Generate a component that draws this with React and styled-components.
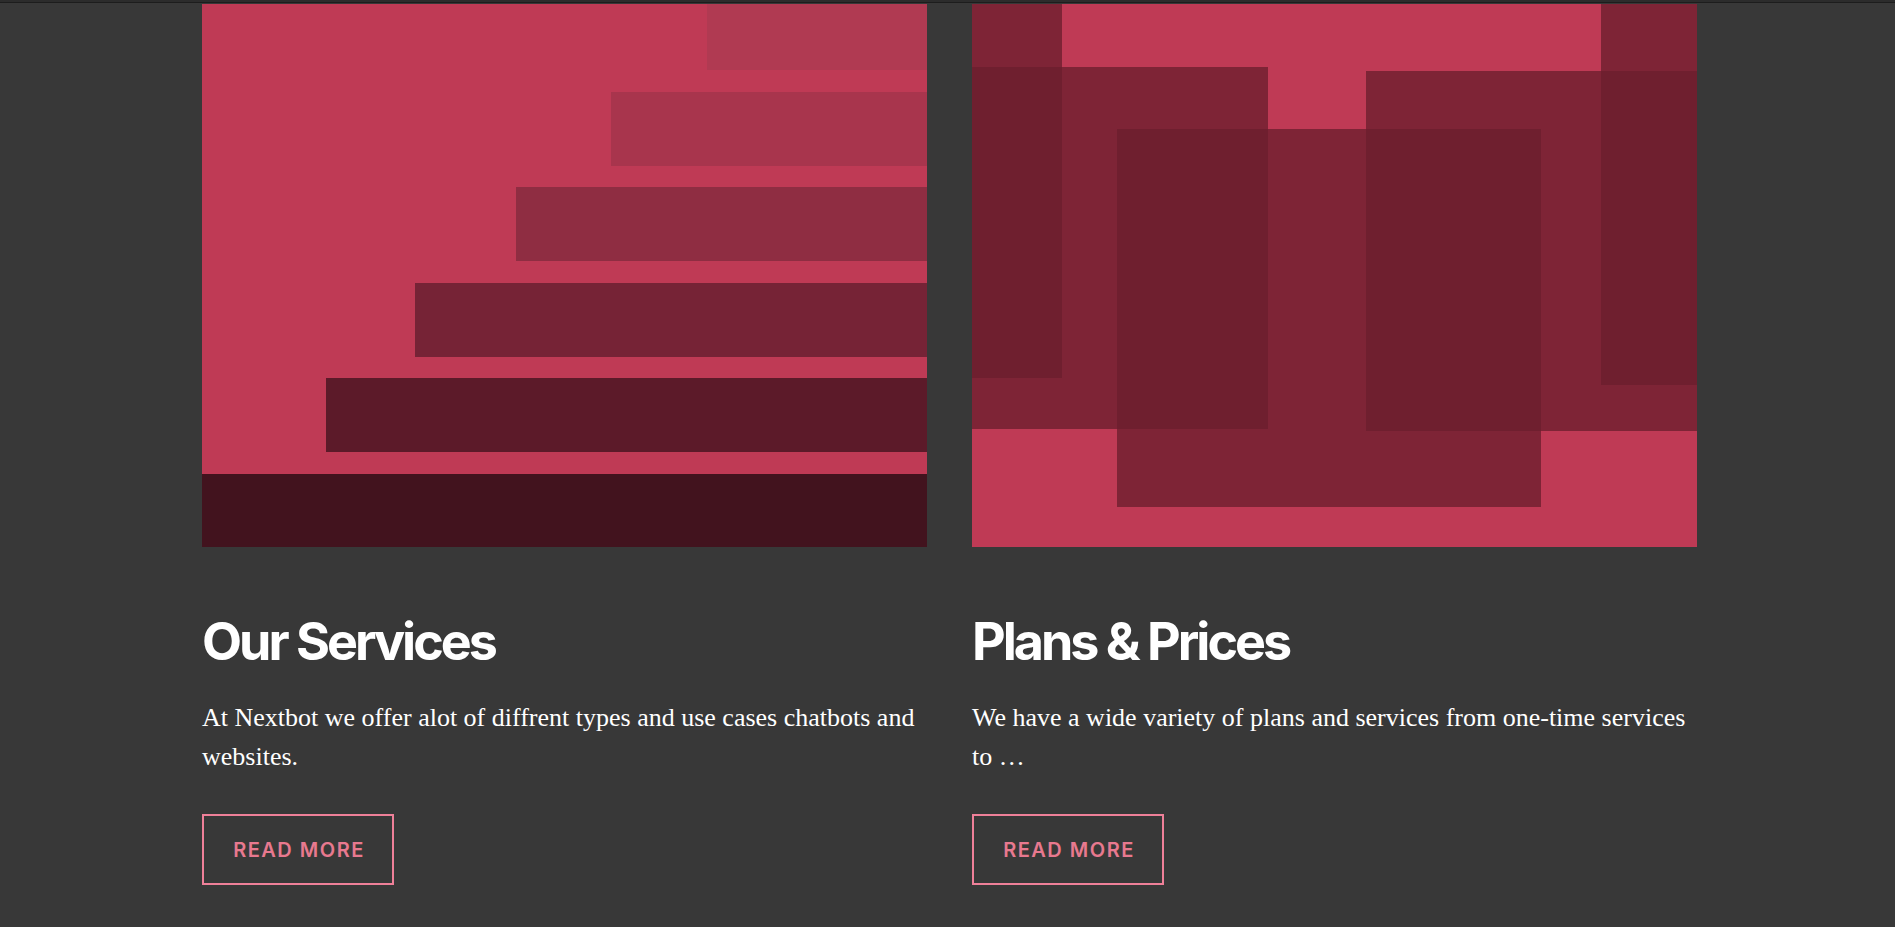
import styled, { createGlobalStyle } from "styled-components";

const GlobalStyle = createGlobalStyle`
  html, body {
    margin: 0;
    padding: 0;
    background: #383838;
  }
`;

const cards = [
  {
    title: "Our Services",
    text: "At Nextbot we offer alot of diffrent types and use cases chatbots and websites.",
    art: "steps",
  },
  {
    title: "Plans & Prices",
    text: "We have a wide variety of plans and services from one-time services to\u00a0…",
    art: "blocks",
  },
];

function StepsArt() {
  const bars = [
    { x: 505, y: -8, h: 74, fill: "#b03a52" },
    { x: 409, y: 88, h: 74, fill: "#a8354d" },
    { x: 314, y: 183, h: 74, fill: "#8f2d42" },
    { x: 213, y: 279, h: 74, fill: "#762336" },
    { x: 124, y: 374, h: 74, fill: "#5c1a29" },
    { x: 0, y: 470, h: 73, fill: "#42131e" },
  ];
  return (
    <svg viewBox="0 0 725 543" width="100%" height="100%" preserveAspectRatio="none">
      <rect width="725" height="543" fill="#bf3a55" />
      {bars.map((b, i) => (
        <rect key={i} x={b.x} y={b.y} width={725 - b.x} height={b.h} fill={b.fill} />
      ))}
    </svg>
  );
}

function BlocksArt() {
  const blocks = [
    { x: 0, y: -10, w: 90, h: 384 },
    { x: 0, y: 63, w: 296, h: 362 },
    { x: 629, y: -10, w: 96, h: 391 },
    { x: 394, y: 67, w: 331, h: 360 },
    { x: 145, y: 125, w: 424, h: 378 },
  ];
  return (
    <svg viewBox="0 0 725 543" width="100%" height="100%" preserveAspectRatio="none">
      <rect width="725" height="543" fill="#bf3a55" />
      {blocks.map((b, i) => (
        <rect key={i} x={b.x} y={b.y} width={b.w} height={b.h} fill="#6b1e2d" fillOpacity="0.77" />
      ))}
    </svg>
  );
}

export default function App() {
  return (
    <>
      <GlobalStyle />
      <TopEdge />
      <Page>
        {cards.map((c) => (
          <Card key={c.title}>
            <Art>{c.art === "steps" ? <StepsArt /> : <BlocksArt />}</Art>
            <Title>{c.title}</Title>
            <Text>{c.text}</Text>
            <ReadMore href="#">Read More</ReadMore>
          </Card>
        ))}
      </Page>
    </>
  );
}

const TopEdge = styled.div`
  height: 2px;
  background: #2c2c2c;
  border-bottom: 1px solid #1d1d1d;
`;

const Page = styled.main`
  display: grid;
  grid-template-columns: 1fr 1fr;
  gap: 45px;
  padding: 1px 198px 0 202px;
`;

const Card = styled.article`
  display: flex;
  flex-direction: column;
  align-items: flex-start;
`;

const Art = styled.div`
  width: 100%;
  height: 543px;
  svg {
    display: block;
  }
`;

const Title = styled.h2`
  margin: 64px 0 0;
  font-family: Inter, "Noto Sans", sans-serif;
  font-weight: 700;
  font-size: 52px;
  line-height: 1.2;
  letter-spacing: -3px;
  color: #ffffff;
`;

const Text = styled.p`
  margin: 25px 0 0;
  font-family: "Liberation Serif", "Times New Roman", serif;
  font-size: 26px;
  line-height: 39px;
  color: #ffffff;
`;

const ReadMore = styled.a`
  margin-top: 38px;
  display: inline-flex;
  align-items: center;
  justify-content: center;
  box-sizing: border-box;
  width: 192px;
  height: 71px;
  padding-left: 2px;
  border: 2px solid #ef8099;
  font-family: Inter, "Noto Sans", sans-serif;
  font-weight: 600;
  font-size: 20px;
  letter-spacing: 1.5px;
  text-transform: uppercase;
  text-decoration: none;
  color: #e8798f;
`;
